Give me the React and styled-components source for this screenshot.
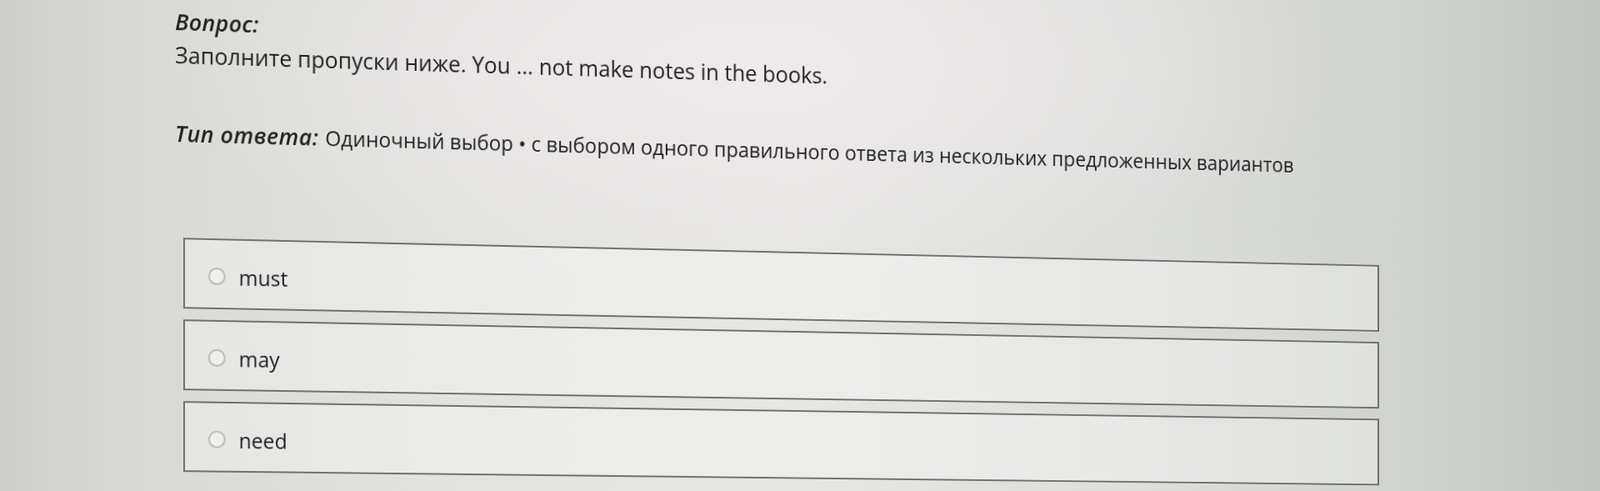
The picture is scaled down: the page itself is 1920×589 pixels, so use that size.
import React from "react";
import styled, { createGlobalStyle } from "styled-components";

const GlobalStyle = createGlobalStyle`
  html, body {
    margin: 0;
    height: 589px;
    overflow: hidden;
  }
  body {
    font-family: "Open Sans", "Noto Sans", "Liberation Sans", sans-serif;
    color: #212121;
    background:
      radial-gradient(ellipse 700px 260px at 900px 80px, rgba(240, 234, 236, 0.9), rgba(240, 234, 236, 0) 100%),
      linear-gradient(90deg, #cbcdc9 0%, #d8d9d5 7%, #e3e3e0 30%, #e6e6e3 50%, #dcdedb 72%, #cfd2cd 88%, #c2c5bf 100%);
  }
`;

const Page = styled.div`
  padding: 10px 0 0 210px;
`;

// the screen is photographed at an angle: the right side is further away
// and everything slopes down to the right
const Sheet = styled.div`
  padding-bottom: 16px;
  transform: skewY(1.27deg) perspective(1713px) rotateY(4deg);
  transform-origin: 0 290px;
`;

const Caption = styled.div`
  font-size: 27px;
  line-height: 32px;
  font-style: italic;
  font-weight: 600;
  letter-spacing: 0.3px;
`;

const QuestionText = styled.div`
  margin-top: 7px;
  font-size: 27px;
  line-height: 34px;
`;

const AnswerType = styled.div`
  margin-top: 60px;
  font-size: 25px;
  line-height: 34px;
  white-space: nowrap;
`;

const TypeLabel = styled.span`
  font-size: 27px;
  font-style: italic;
  font-weight: 600;
  letter-spacing: 0.5px;
  margin-right: 8px;
`;

const OptionList = styled.div`
  margin: 108px 0 0 10px;
  width: 1529px;
  display: flex;
  flex-direction: column;
  gap: 13px;
`;

const Option = styled.label`
  box-sizing: border-box;
  height: 85px;
  padding: 6px 0 0 28px;
  display: flex;
  align-items: center;
  gap: 16px;
  border: 2px solid #6f716e;
  background: rgba(255, 255, 255, 0.3);
  font-size: 25px;
  line-height: 34px;
  cursor: pointer;
`;

const Radio = styled.span`
  box-sizing: border-box;
  width: 21px;
  height: 21px;
  border-radius: 50%;
  border: 2px solid #b8bab7;
  background: #eef0ed;
  flex: none;
`;

const options = ["must", "may", "need"];

export default function App() {
  return (
    <>
      <GlobalStyle />
      <Page>
        <Sheet>
          <Caption>Вопрос:</Caption>
          <QuestionText>
            Заполните пропуски ниже. You ... not make notes in the books.
          </QuestionText>
          <AnswerType>
            <TypeLabel>Тип ответа:</TypeLabel>
            Одиночный выбор • с выбором одного правильного ответа из нескольких
            предложенных вариантов
          </AnswerType>
          <OptionList>
            {options.map(option => (
              <Option key={option}>
                <Radio />
                {option}
              </Option>
            ))}
          </OptionList>
        </Sheet>
      </Page>
    </>
  );
}
